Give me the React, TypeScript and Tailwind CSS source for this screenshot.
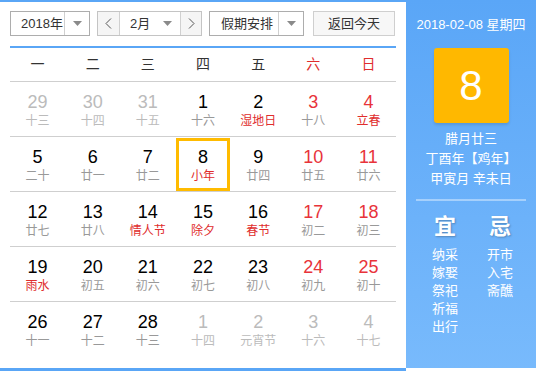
import React from "react";

type Cell = { n: string; l: string; other?: boolean; redN?: boolean; redL?: boolean; today?: boolean };

const rows: Cell[][] = [
  [
    { n: "29", l: "十三", other: true },
    { n: "30", l: "十四", other: true },
    { n: "31", l: "十五", other: true },
    { n: "1", l: "十六" },
    { n: "2", l: "湿地日", redL: true },
    { n: "3", l: "十八", redN: true },
    { n: "4", l: "立春", redN: true, redL: true },
  ],
  [
    { n: "5", l: "二十" },
    { n: "6", l: "廿一" },
    { n: "7", l: "廿二" },
    { n: "8", l: "小年", redL: true, today: true },
    { n: "9", l: "廿四" },
    { n: "10", l: "廿五", redN: true },
    { n: "11", l: "廿六", redN: true },
  ],
  [
    { n: "12", l: "廿七" },
    { n: "13", l: "廿八" },
    { n: "14", l: "情人节", redL: true },
    { n: "15", l: "除夕", redL: true },
    { n: "16", l: "春节", redL: true },
    { n: "17", l: "初二", redN: true },
    { n: "18", l: "初三", redN: true },
  ],
  [
    { n: "19", l: "雨水", redL: true },
    { n: "20", l: "初五" },
    { n: "21", l: "初六" },
    { n: "22", l: "初七" },
    { n: "23", l: "初八" },
    { n: "24", l: "初九", redN: true },
    { n: "25", l: "初十", redN: true },
  ],
  [
    { n: "26", l: "十一" },
    { n: "27", l: "十二" },
    { n: "28", l: "十三" },
    { n: "1", l: "十四", other: true },
    { n: "2", l: "元宵节", other: true },
    { n: "3", l: "十六", other: true },
    { n: "4", l: "十七", other: true },
  ],
];

const weekdays = ["一", "二", "三", "四", "五", "六", "日"];

function Caret() {
  return (
    <svg width="9" height="5" viewBox="0 0 9 5">
      <path d="M0 0 L9 0 L4.5 5 Z" fill="#8a8a8a" />
    </svg>
  );
}

function Chevron({ dir }: { dir: "l" | "r" }) {
  return (
    <svg width="7" height="11" viewBox="0 0 7 11">
      <polyline
        points={dir === "l" ? "6,0.5 1,5.5 6,10.5" : "1,0.5 6,5.5 1,10.5"}
        fill="none"
        stroke="#555"
        strokeWidth="1"
      />
    </svg>
  );
}

export default function App() {
  return (
    <div
      className="w-[536px] h-[371px] flex bg-white text-[#333] overflow-hidden"
      style={{ fontFamily: '"Liberation Sans", Arial, "Noto Sans CJK SC", sans-serif' }}
    >
      <div className="w-[406px] h-[371px] border-t-2 border-b-[3px] border-[#5aa6f6] px-[10px] pt-[9px] shrink-0">
        {/* controls */}
        <div className="flex h-[25px] text-[13px]">
          <div className="w-[80px] h-[25px] border border-[#adadad] flex">
            <div className="flex-1 flex items-center pl-[10px] leading-none">2018年</div>
            <div className="w-[25px] border-l border-[#d0d0d0] flex items-center justify-center">
              <Caret />
            </div>
          </div>
          <div className="ml-[7px] w-[105px] h-[25px] border border-[#c4c4c4] flex">
            <div className="w-[22px] bg-[#f5f5f5] flex items-center justify-center border-r border-[#d0d0d0]">
              <Chevron dir="l" />
            </div>
            <div className="w-[60px] flex items-center pl-[10px] pr-[8px] justify-between">
              <span className="leading-none">2月</span>
              <Caret />
            </div>
            <div className="flex-1 bg-[#f5f5f5] flex items-center justify-center border-l border-[#d0d0d0]">
              <Chevron dir="r" />
            </div>
          </div>
          <div className="ml-[7px] w-[95px] h-[25px] border border-[#adadad] flex">
            <div className="flex-1 flex items-center pl-[11px] leading-none">假期安排</div>
            <div className="w-[25px] border-l border-[#d0d0d0] flex items-center justify-center">
              <Caret />
            </div>
          </div>
          <div className="ml-[9px] w-[82px] h-[25px] border border-[#cfcfcf] bg-[#f7f7f7] flex items-center justify-center leading-none">
            返回今天
          </div>
        </div>
        <div className="mt-[10px] h-[2px] bg-[#5aa6f6]" />
        {/* weekday header */}
        <div className="grid grid-cols-7 h-[34px] border-b border-[#cfcfcf] text-[14px]">
          {weekdays.map((w, i) => (
            <div
              key={w}
              className={"flex items-center justify-center " + (i >= 5 ? "text-[#e02d2d]" : "text-[#333]")}
            >
              {w}
            </div>
          ))}
        </div>
        {/* days */}
        {rows.map((r, ri) => (
          <div
            key={ri}
            className={"grid grid-cols-7 h-[55px] " + (ri < rows.length - 1 ? "border-b border-[#cfcfcf]" : "")}
          >
            {r.map((c, ci) => (
              <div key={ci} className="relative flex flex-col items-center pt-[10px]">
                {c.today && (
                  <div className="absolute left-[1px] right-[1px] top-[1px] bottom-0 border-[3px] border-[#ffbb00]" />
                )}
                <div
                  className={
                    "text-[18px] leading-[20px] " +
                    (c.other ? "text-[#bbbbbb]" : c.redN ? "text-[#e8333a]" : "text-black")
                  }
                >
                  {c.n}
                </div>
                <div
                  className={
                    "text-[12px] leading-[18px] " +
                    (c.other ? "text-[#bbbbbb]" : c.redL ? "text-[#e02d2d]" : "text-[#999]")
                  }
                >
                  {c.l}
                </div>
              </div>
            ))}
          </div>
        ))}
      </div>
      {/* right panel */}
      <div className="w-[130px] h-[368px] shrink-0 bg-gradient-to-b from-[#5aa6f7] to-[#78bafc] text-white flex flex-col items-center">
        <div className="mt-[17px] text-[13px] leading-[16px]">2018-02-08 星期四</div>
        <div className="mt-[15px] w-[75px] h-[75px] rounded-[3px] bg-[#ffb800] flex items-center justify-center text-[42px] font-light shadow-[0_2px_3px_rgba(0,0,0,0.12)]">
          8
        </div>
        <div className="mt-[6px] text-[13px] leading-[20px] text-center">
          <div>腊月廿三</div>
          <div>丁酉年【鸡年】</div>
          <div>甲寅月 辛未日</div>
        </div>
        <div className="mt-[10px] w-[110px] h-[2px] bg-white/40" />
        <div className="mt-[12px] w-full pl-[26px] flex">
          <div className="w-[55px] flex flex-col">
            <div className="w-[26px] text-center text-[22px] font-bold leading-[28px] [text-shadow:1px_1px_2px_rgba(0,0,0,0.25)]">宜</div>
            <div className="mt-[5px] text-[13px] leading-[18px]">
              <div>纳采</div>
              <div>嫁娶</div>
              <div>祭祀</div>
              <div>祈福</div>
              <div>出行</div>
            </div>
          </div>
          <div className="flex flex-col">
            <div className="w-[26px] text-center text-[22px] font-bold leading-[28px] [text-shadow:1px_1px_2px_rgba(0,0,0,0.25)]">忌</div>
            <div className="mt-[5px] text-[13px] leading-[18px]">
              <div>开市</div>
              <div>入宅</div>
              <div>斋醮</div>
            </div>
          </div>
        </div>
      </div>
    </div>
  );
}
